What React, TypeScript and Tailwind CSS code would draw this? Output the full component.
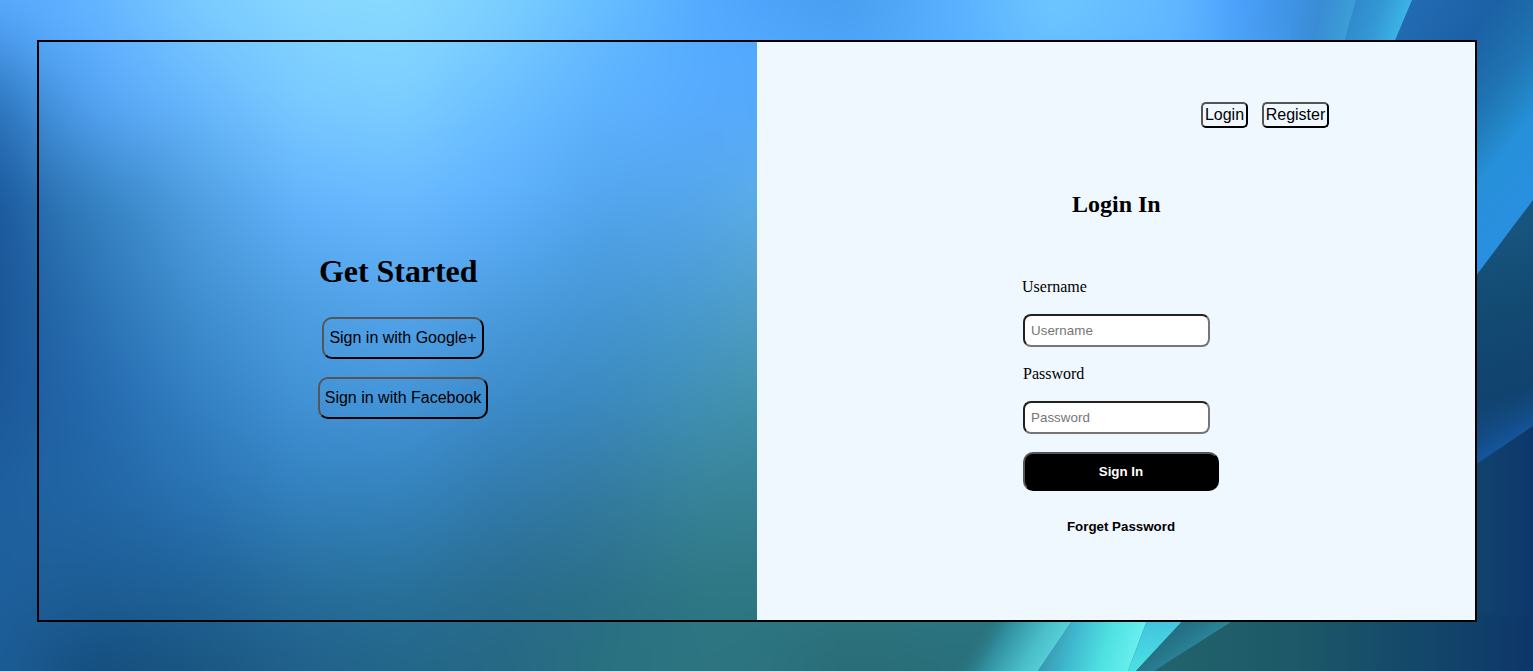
import React from "react";

const XS = [0, 40, 100, 200, 300, 400, 500, 600, 700, 757, 850, 950, 1050, 1180, 1235, 1300, 1533];
const ROWS: [number, string[]][] = [
  [0, ["#5aa9ff", "#5cadff", "#65b6ff", "#7accff", "#88d8ff", "#8adaff", "#7bd0ff", "#68c0ff", "#55abff", "#4da3fa", "#489dee", "#58b0ff", "#6ec6ff", "#62b8ff", "#4aa1ff", "#3f92e2", "#3a8ed8"]],
  [40, ["#4897e8", "#57a8fa", "#5fafff", "#74c4ff", "#80d1ff", "#84d6ff", "#77caff", "#63b8ff", "#55acff", "#52a9fd", "#4da3f5", "#58b0ff", "#6cc3ff", "#60b6ff", "#4ca1f8", "#3c8fdc", "#3c8fdc"]],
  [100, ["#2c76be", "#418fda", "#57a6f8", "#68b8ff", "#7acbff", "#7ccfff", "#6cc0ff", "#5eb3ff", "#58abff", "#55a9fd"]],
  [200, ["#1a579c", "#296eae", "#3582c1", "#509fe2", "#64b4ff", "#69b9ff", "#5fb1ff", "#53a5ee", "#55a6eb", "#5bade8"]],
  [300, ["#1a5596", "#2263a5", "#2c74b5", "#4190d0", "#4f9fe4", "#54a5ec", "#4c9de0", "#4597d6", "#4a9bd0", "#509fc8"]],
  [400, ["#1b5799", "#2060a2", "#246aae", "#3380c2", "#4292d6", "#4495d9", "#3c8bca", "#3b89c0", "#4090b6", "#4292ab"]],
  [500, ["#1e609f", "#2063a2", "#2266a5", "#2972b2", "#3280bc", "#3482bc", "#3179aa", "#33799f", "#378397", "#378294"]],
  [600, ["#1d5f9c", "#1e5e97", "#1c5c92", "#1e6095", "#256b98", "#276f98", "#286b8c", "#2a6f86", "#2d7683", "#2d7682"]],
  [671, ["#1c5c96", "#195589", "#144d7d", "#1b5680", "#20608a", "#236688", "#266884", "#297080", "#2d7580", "#2c7380", "#296b75", "#286f7b"]],
];

function Lin({ id, p, stops }: { id: string; p: number[]; stops: [number, string][] }) {
  return (
    <linearGradient id={id} gradientUnits="userSpaceOnUse" x1={p[0]} y1={p[1]} x2={p[2]} y2={p[3]}>
      {stops.map(([o, c]) => (
        <stop key={o} offset={o} stopColor={c} />
      ))}
    </linearGradient>
  );
}

function Wallpaper() {
  return (
    <svg className="absolute inset-0 -z-10 h-full w-full" viewBox="0 0 1533 671" preserveAspectRatio="none" aria-hidden="true">
      <defs>
        <filter id="soften" filterUnits="userSpaceOnUse" x="-100" y="-100" width="1733" height="871" colorInterpolationFilters="sRGB">
          <feGaussianBlur stdDeviation="18 20" />
        </filter>
        {ROWS.map(([y, colors], i) => (
          <React.Fragment key={y}>
            <Lin id={`row${i}`} p={[0, 0, 1533, 0]} stops={colors.map((c, k) => [XS[k] / 1533, c] as [number, string])} />
            {i > 0 && (
              <>
                <Lin id={`fade${i}`} p={[0, ROWS[i - 1][0], 0, y]} stops={[[0, "#000"], [1, "#fff"]]} />
                <mask id={`mask${i}`} maskUnits="userSpaceOnUse" x="-100" y="-100" width="1733" height="871">
                  <rect x="-100" y="-100" width="1733" height="871" fill={`url(#fade${i})`} />
                </mask>
              </>
            )}
          </React.Fragment>
        ))}
        <Lin id="t1" p={[1290, 0, 1350, 15]} stops={[[0, "#3d90de00"], [0.5, "#3a8cd5"], [1, "#3b9dd6"]]} />
        <Lin id="t2" p={[1350, 10, 1405, 30]} stops={[[0, "#2f88cb"], [0.5, "#3499d6"], [1, "#3db9e7"]]} />
        <Lin id="r1" p={[1415, 0, 1587, 136]} stops={[[0, "#226bb3"], [0.3, "#1c61a6"], [0.42, "#1d6aaa"], [0.53, "#1f73b2"], [0.64, "#2282c2"], [0.75, "#2690d9"], [1, "#2a8fe1"]]} />
        <Lin id="r2" p={[1475, 240, 1530, 440]} stops={[[0, "#17547e"], [0.35, "#124a72"], [0.75, "#11436f"], [1, "#124a82"]]} />
        <Lin id="r2b" p={[1490, 402, 1510, 440]} stops={[[0, "#11457300"], [1, "#14549a"]]} />
        <Lin id="r3" p={[1477, 0, 1533, 0]} stops={[[0, "#11436c"], [0.5, "#0f3d6d"], [1, "#0d376b"]]} />
        <Lin id="b0" p={[968, 645, 1044, 690]} stops={[[0, "#2a737c00"], [0.3, "#3190a0"], [0.65, "#4abdc8"], [1, "#5cdae2"]]} />
        <Lin id="b1" p={[1050, 630, 1135, 655]} stops={[[0, "#3798ae"], [0.3, "#40b9d0"], [0.65, "#4fe0e1"], [1, "#67efee"]]} />
        <Lin id="b2" p={[1150, 622, 1160, 671]} stops={[[0, "#42c3df"], [1, "#4be4e2"]]} />
        <Lin id="b3" p={[1180, 630, 1198, 654]} stops={[[0, "#257084"], [1, "#2c8a9e"]]} />
        <Lin id="b4" p={[1160, 0, 1533, 0]} stops={[[0, "#21636c"], [0.35, "#1d5968"], [0.6, "#164c69"], [0.8, "#11426a"], [1, "#0d3669"]]} />
      </defs>
      <g filter="url(#soften)">
        {ROWS.map(([y], i) => (
          <rect key={y} x="-100" y="-100" width="1733" height="871" fill={`url(#row${i})`} mask={i > 0 ? `url(#mask${i})` : undefined} />
        ))}
      </g>
      <path d="M1290 0H1356L1342 50H1290Z" fill="url(#t1)" />
      <path d="M1356 0H1412L1391 50H1342Z" fill="url(#t2)" />
      <path d="M1412 0H1533V220L1460 310V50H1391Z" fill="url(#r1)" />
      <path d="M1533 200V440L1460 480V297Z" fill="url(#r2)" />
      <path d="M1533 340V440L1460 480V380Z" fill="url(#r2b)" />
      <path d="M1533 426V671H1460V475Z" fill="url(#r3)" />
      <path d="M950 615H1076L1038 671H950Z" fill="url(#b0)" />
      <path d="M1076 615L1038 671H1128L1149 615Z" fill="url(#b1)" />
      <path d="M1149 615L1128 671H1136L1188 615Z" fill="url(#b2)" />
      <path d="M1188 615L1136 671H1154L1242 615Z" fill="url(#b3)" />
      <path d="M1242 615L1154 671H1533V615Z" fill="url(#b4)" />
    </svg>
  );
}

const outset = "border-2 border-t-[#555] border-l-[#555] border-r-black border-b-black";
const field =
  "h-[33px] w-[187px] rounded-[8px] border-2 border-t-[#212121] border-l-[#212121] border-r-[#767676] border-b-[#767676] bg-white px-[6px] font-[Liberation_Sans,sans-serif] text-[13.333px] placeholder:text-[#757575]";

export default function App() {
  return (
    <div className="relative isolate h-[671px] w-full overflow-hidden pt-10 pl-[37px] text-black">
      <Wallpaper />
      <main className="flex h-[582px] w-[1440px] border-2 border-black">
        <section className="flex w-[718px] flex-col items-start pt-[208px] pl-[279px]">
          <h1 className="ml-[1px] font-[Liberation_Serif,serif] text-[32px] leading-[42px] font-bold tracking-[-0.05px] whitespace-nowrap">Get Started</h1>
          <button className={`mt-[25px] ml-1 h-[42px] w-[162px] rounded-[10px] font-[Liberation_Sans,sans-serif] text-base whitespace-nowrap ${outset}`}>
            Sign in with Google+
          </button>
          <button className={`mt-[18px] h-[42px] w-[170px] rounded-[10px] font-[Liberation_Sans,sans-serif] text-base whitespace-nowrap ${outset}`}>
            Sign in with Facebook
          </button>
        </section>
        <section className="flex w-[718px] flex-col bg-[#f0f8ff] pt-[60px]">
          <nav className="flex gap-[14px] pl-[444px] font-[Liberation_Sans,sans-serif] text-base leading-[22px]">
            <button className={`h-[26px] w-[47px] rounded-[5px] ${outset}`}>Login</button>
            <button className={`h-[26px] w-[67px] rounded-[5px] ${outset}`}>Register</button>
          </nav>
          <form className="flex flex-col items-start pt-[62px] pl-[266px]" onSubmit={(e) => e.preventDefault()}>
            <h2 className="ml-[49px] font-[Liberation_Serif,serif] text-2xl leading-7 font-bold whitespace-nowrap">Login In</h2>
            <label htmlFor="username" className="mt-[59px] -ml-[1px] font-[Liberation_Serif,serif] text-base leading-5">Username</label>
            <input id="username" placeholder="Username" className={`mt-[17px] tracking-[0.05px] ${field}`} />
            <label htmlFor="password" className="mt-[17px] font-[Liberation_Serif,serif] text-base leading-5">Password</label>
            <input id="password" type="password" placeholder="Password" className={`mt-[17px] tracking-[0.05px] ${field}`} />
            <button className={`mt-[18px] h-[39px] w-[196px] rounded-[10px] bg-black font-[Liberation_Sans,sans-serif] text-[13.333px] font-bold text-white ${outset}`}>
              Sign In
            </button>
            <button className="mt-[26px] h-[20px] w-[196px] font-[Liberation_Sans,sans-serif] text-[13.333px] font-bold">Forget Password</button>
          </form>
        </section>
      </main>
    </div>
  );
}
